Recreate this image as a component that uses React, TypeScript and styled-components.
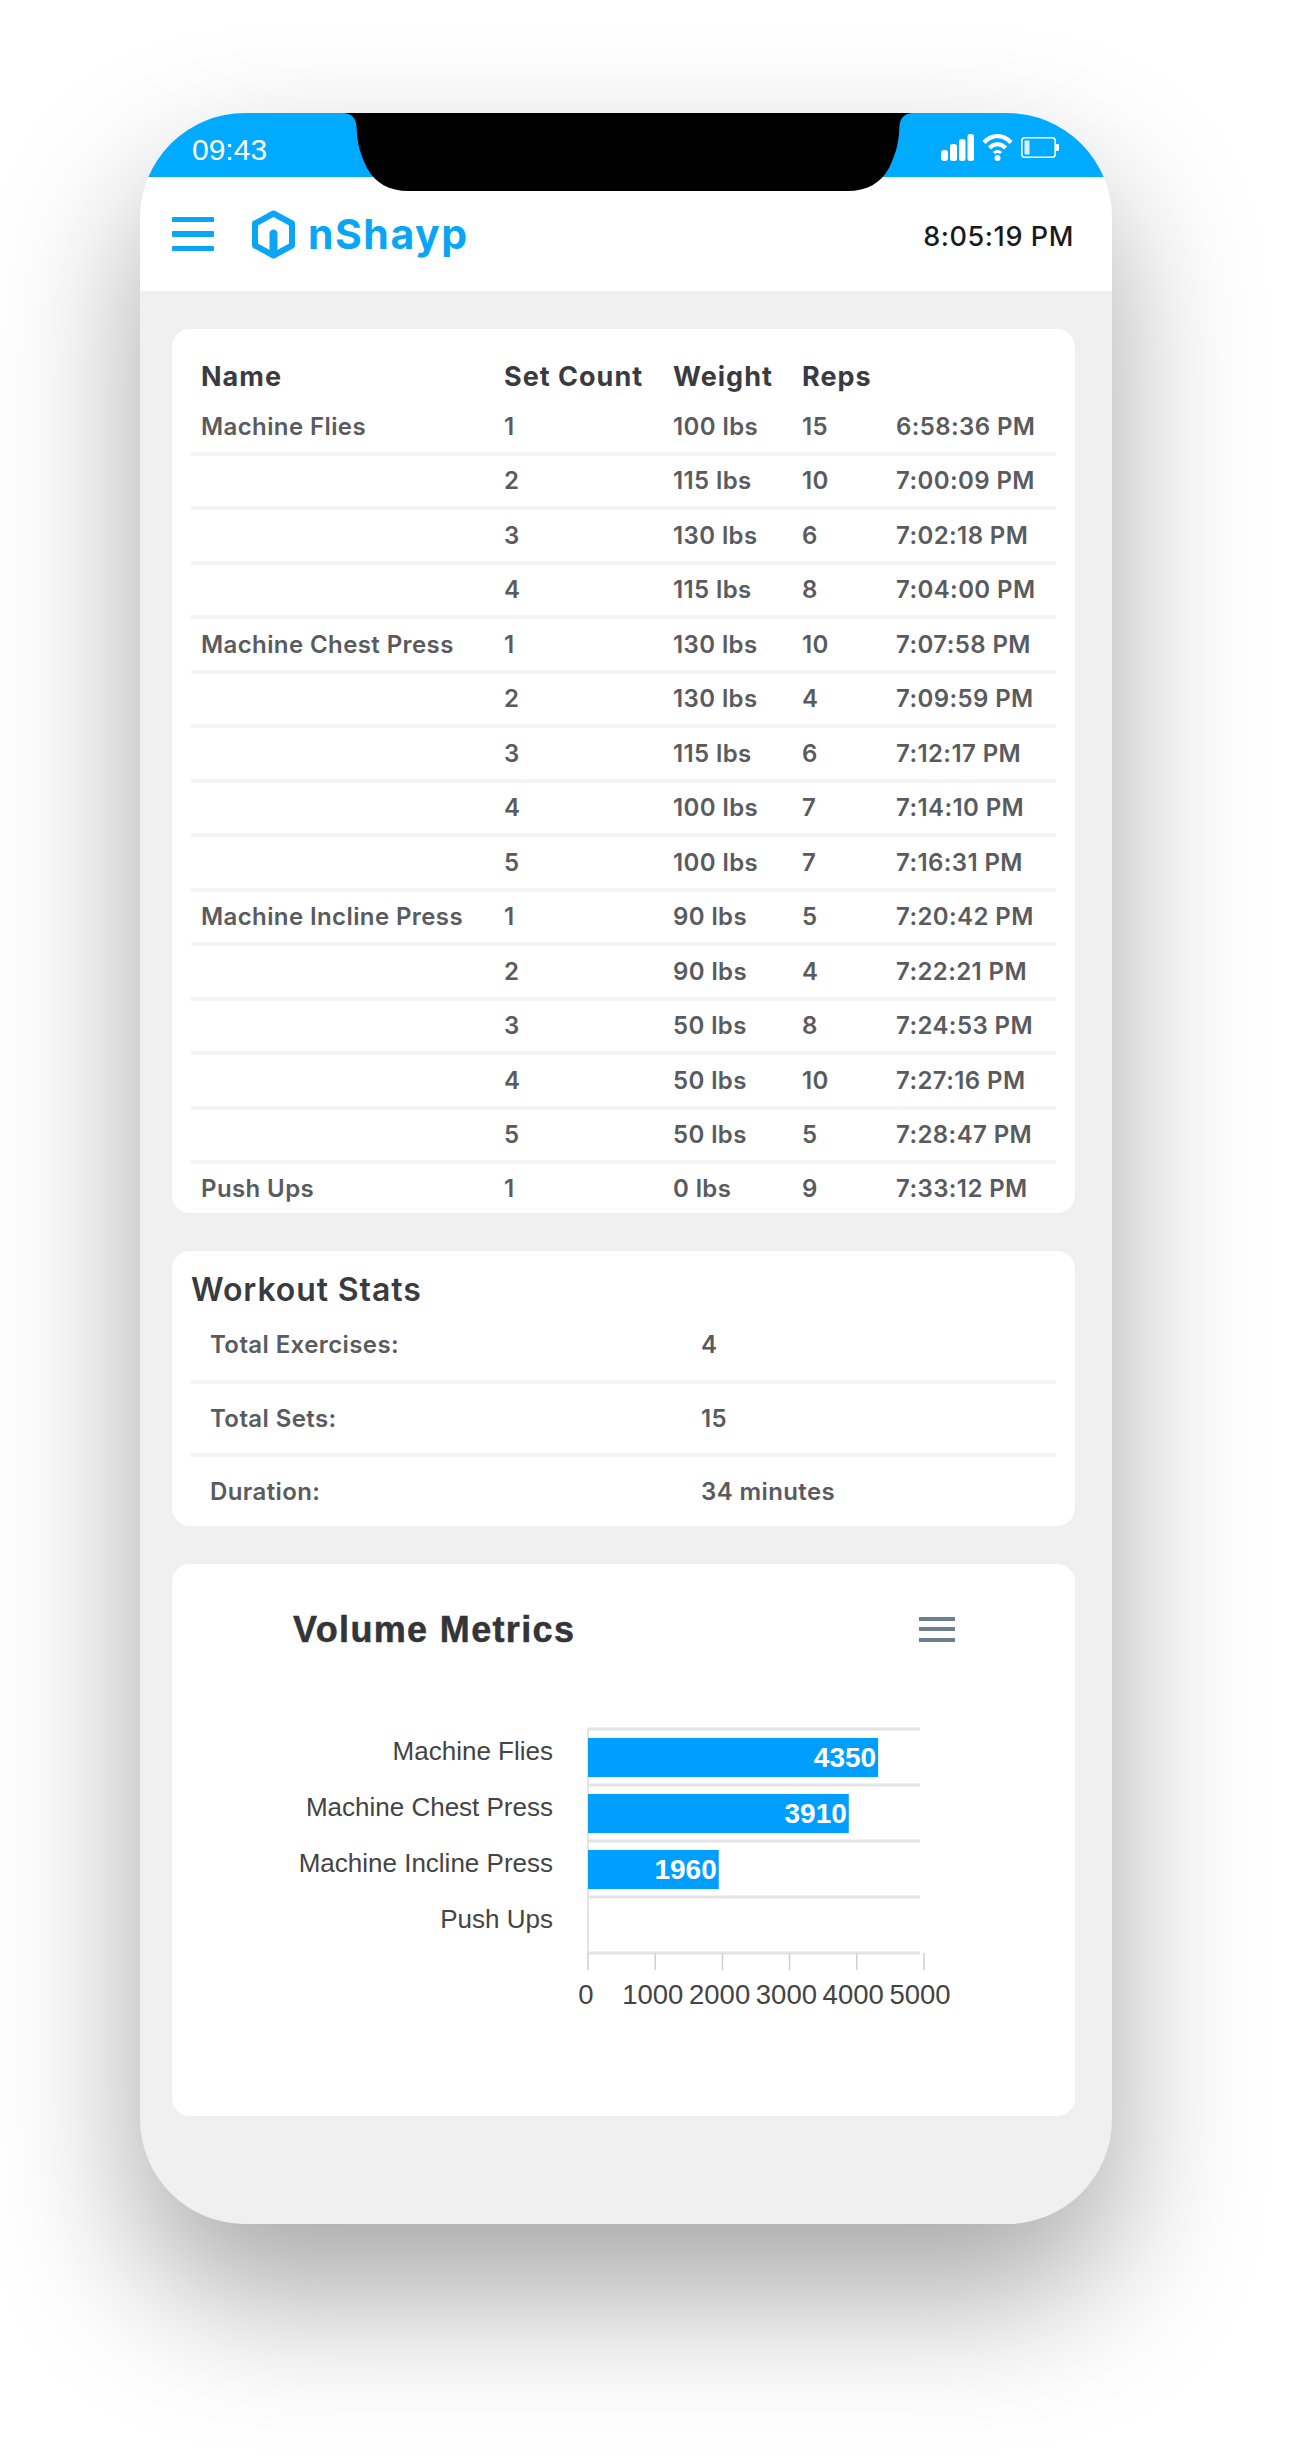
import React from 'react';
import styled, { createGlobalStyle } from 'styled-components';

const GlobalStyle = createGlobalStyle`
  html, body {
    margin: 0;
    padding: 0;
    background: #ffffff;
    font-family: 'Inter', 'Liberation Sans', sans-serif;
  }
`;

const Stage = styled.div`
  width: 1301px;
  height: 2463px;
  padding: 113px 0 0 140px;
  box-sizing: border-box;
  overflow: hidden;
`;

const Phone = styled.div`
  position: relative;
  width: 972px;
  height: 2111px;
  border-radius: 105px;
  background: #f0f0f0;
  box-shadow: 0 70px 145px rgba(0, 0, 0, 0.35);
  overflow: hidden;
`;

const StatusBar = styled.div`
  height: 64px;
  box-sizing: border-box;
  padding: 10px 53px 0 52px;
  background: #00aaff;
  display: flex;
  align-items: center;
  justify-content: space-between;
  color: #ffffff;
`;

const StatusTime = styled.span`
  font-family: 'Liberation Sans', sans-serif;
  font-size: 30px;
  line-height: 34px;
`;

const StatusIcons = styled.div`
  display: flex;
  align-items: center;
  gap: 8px;
  margin-bottom: 6px;
`;

const Notch = styled.svg`
  position: absolute;
  top: 0;
  left: 203px;
  display: block;
`;

const Header = styled.header`
  height: 114px;
  box-sizing: border-box;
  padding: 0 38px 0 32px;
  background: #ffffff;
  display: flex;
  align-items: center;
`;

const MenuButton = styled.div`
  width: 42px;
  display: flex;
  flex-direction: column;
  gap: 9px;
  margin-right: 38px;
`;

const MenuLine = styled.span`
  display: block;
  height: 5.5px;
  border-radius: 1px;
  background: #0aa5f5;
`;

const Logo = styled.div`
  display: flex;
  align-items: center;
  gap: 13px;
`;

const LogoText = styled.span`
  font-size: 41px;
  line-height: 49px;
  font-weight: 700;
  letter-spacing: 1.5px;
  color: #0aa5f5;
`;

const Clock = styled.span`
  margin-left: auto;
  margin-top: 5px;
  font-size: 27px;
  font-weight: 500;
  letter-spacing: 0.6px;
  color: #1a1a1a;
`;

const Content = styled.main`
  padding: 38px 37px 0 32px;
  display: flex;
  flex-direction: column;
  gap: 38px;
`;

const Card = styled.section`
  background: #ffffff;
  border-radius: 18px;
`;

const TableCard = styled(Card)`
  padding: 23px 19px 0;
`;

const tableColumns = '303px 169px 129px 94px 1fr';

const HeadRow = styled.div`
  display: grid;
  grid-template-columns: ${tableColumns};
  height: 49px;
  align-items: center;
  padding-left: 10px;
  font-size: 27px;
  font-weight: 700;
  letter-spacing: 1px;
  color: #3a3b3f;
`;

const Row = styled.div<{ $last: boolean }>`
  display: grid;
  grid-template-columns: ${tableColumns};
  height: ${({ $last }) => ($last ? '49px' : '54.5px')};
  box-sizing: border-box;
  align-items: center;
  padding-left: 10px;
  font-size: 24px;
  font-weight: 600;
  letter-spacing: 0.4px;
  color: #5a5b5f;
  border-bottom: ${({ $last }) => ($last ? 'none' : '4px solid #f4f4f4')};
`;

const StatsCard = styled(Card)`
  padding: 0 19px;
`;

const StatsTitle = styled.h2`
  margin: 0;
  height: 59px;
  display: flex;
  align-items: flex-end;
  box-sizing: border-box;
  font-size: 32px;
  line-height: 40px;
  font-weight: 600;
  letter-spacing: 0.9px;
  color: #3a3b3f;
`;

const StatRow = styled.div<{ $last: boolean }>`
  display: grid;
  grid-template-columns: 491px 1fr;
  align-items: center;
  height: ${({ $last }) => ($last ? '69px' : '73.5px')};
  box-sizing: border-box;
  padding-left: 19px;
  font-size: 24px;
  font-weight: 600;
  letter-spacing: 0.4px;
  color: #5a5b5f;
  border-bottom: ${({ $last }) => ($last ? 'none' : '4.5px solid #f4f4f4')};
`;

const ChartCard = styled(Card)`
  height: 552px;
  box-sizing: border-box;
  padding-top: 45px;
`;

const ChartHead = styled.div`
  display: flex;
  align-items: center;
  justify-content: space-between;
  height: 40px;
  padding: 0 120px 0 121px;
`;

const ChartTitle = styled.h2`
  margin: 2px 0 0;
  font-family: 'Liberation Sans', sans-serif;
  font-size: 36px;
  font-weight: 700;
  letter-spacing: 1.35px;
  -webkit-text-stroke: 0.5px #333539;
  color: #333539;
`;

const ChartMenu = styled.div`
  width: 36px;
  display: flex;
  flex-direction: column;
  gap: 6.5px;
`;

const ChartMenuLine = styled.span`
  display: block;
  height: 4px;
  background: #6e7f8f;
`;

const ChartPlot = styled.svg`
  display: block;
  margin-top: 51px;
  font-family: 'Liberation Sans', sans-serif;
`;

const sets = [
  ['Machine Flies', '1', '100 lbs', '15', '6:58:36 PM'],
  ['', '2', '115 lbs', '10', '7:00:09 PM'],
  ['', '3', '130 lbs', '6', '7:02:18 PM'],
  ['', '4', '115 lbs', '8', '7:04:00 PM'],
  ['Machine Chest Press', '1', '130 lbs', '10', '7:07:58 PM'],
  ['', '2', '130 lbs', '4', '7:09:59 PM'],
  ['', '3', '115 lbs', '6', '7:12:17 PM'],
  ['', '4', '100 lbs', '7', '7:14:10 PM'],
  ['', '5', '100 lbs', '7', '7:16:31 PM'],
  ['Machine Incline Press', '1', '90 lbs', '5', '7:20:42 PM'],
  ['', '2', '90 lbs', '4', '7:22:21 PM'],
  ['', '3', '50 lbs', '8', '7:24:53 PM'],
  ['', '4', '50 lbs', '10', '7:27:16 PM'],
  ['', '5', '50 lbs', '5', '7:28:47 PM'],
  ['Push Ups', '1', '0 lbs', '9', '7:33:12 PM'],
];

const stats = [
  ['Total Exercises:', '4'],
  ['Total Sets:', '15'],
  ['Duration:', '34 minutes'],
];

const volumes: [string, number][] = [
  ['Machine Flies', 4350],
  ['Machine Chest Press', 3910],
  ['Machine Incline Press', 1960],
  ['Push Ups', 0],
];

const PLOT_X = 416;
const PLOT_TOP = 29;
const ROW_H = 56;
const UNIT = 0.0667;

const VolumeChart = () => (
  <ChartPlot width="903" height="320" viewBox="0 0 903 320">
    {[0, 1, 2, 3, 4].map((i) => (
      <line key={i} x1={PLOT_X} x2="748" y1={PLOT_TOP + i * ROW_H} y2={PLOT_TOP + i * ROW_H} stroke="#e4e4e4" strokeWidth="3" />
    ))}
    <line x1={PLOT_X} x2={PLOT_X} y1={PLOT_TOP} y2={PLOT_TOP + 4 * ROW_H} stroke="#dcdcdc" strokeWidth="1.5" />
    {[0, 1, 2, 3, 4, 5].map((i) => (
      <line key={i} x1={PLOT_X + i * 67.2} x2={PLOT_X + i * 67.2} y1={PLOT_TOP + 4 * ROW_H} y2="270" stroke="#cfcfcf" strokeWidth="1.5" />
    ))}
    {volumes.map(([name, value], i) => (
      <g key={name}>
        <text x="381" y={60 + i * ROW_H} textAnchor="end" fontSize="26" fill="#444444">{name}</text>
        {value > 0 && (
          <>
            <rect x={PLOT_X} y={PLOT_TOP + 9 + i * ROW_H} width={value * UNIT} height="39" fill="#009fff" />
            <text x={PLOT_X + value * UNIT - 2} y={67 + i * ROW_H} textAnchor="end" fontSize="28" fontWeight="700" fill="#ffffff">{value}</text>
          </>
        )}
      </g>
    ))}
    {[0, 1000, 2000, 3000, 4000, 5000].map((tick, i) => (
      <text key={tick} x={414 + i * 66.8} y="304" textAnchor="middle" fontSize="27.5" fill="#444444">{tick}</text>
    ))}
  </ChartPlot>
);

const SignalIcon = () => (
  <svg width="33" height="27" viewBox="0 0 33 27" fill="#ffffff">
    <rect x="0" y="16" width="7" height="11" rx="3" />
    <rect x="9" y="10" width="7" height="17" rx="2.5" />
    <rect x="18" y="5" width="6.5" height="22" rx="2.5" />
    <rect x="26.5" y="0" width="6.5" height="27" rx="2.5" />
  </svg>
);

const WifiIcon = () => (
  <svg width="31" height="28" viewBox="0 0 31 28" fill="none" stroke="#ffffff" strokeWidth="4.2">
    <path d="M2 9.5 C9.5 1 21.5 1 29 9.5" />
    <path d="M7.5 15 C12 10 19 10 23.5 15" />
    <path d="M12 20 C14 18 17 18 19 20" strokeWidth="3" />
    <circle cx="15.5" cy="25" r="3" fill="#ffffff" stroke="none" />
  </svg>
);

const BatteryIcon = () => (
  <svg width="38" height="21" viewBox="0 0 38 21" fill="none">
    <rect x="0.8" y="0.8" width="33.4" height="19.4" rx="3" stroke="#ffffff" strokeWidth="1.6" />
    <rect x="3.5" y="3.5" width="5" height="14" fill="#d7eefb" />
    <rect x="35" y="7" width="3" height="7" rx="1" fill="#ffffff" />
  </svg>
);

const LogoMark = () => (
  <svg width="43" height="49" viewBox="0 0 43 49" fill="none">
    <path d="M21.5 3.5 L40 13.5 V35.5 L21.5 45.5 L3 35.5 V13.5 Z" stroke="#0aa5f5" strokeWidth="6" strokeLinejoin="round" />
    <path d="M17.5 44 V23.5 C17.5 21.3 19.3 19.5 21.5 19.5 C23.7 19.5 25.5 21.3 25.5 23.5 V44 Z" fill="#0aa5f5" />
  </svg>
);

export default function App() {
  return (
    <>
      <GlobalStyle />
      <Stage>
        <Phone>
          <StatusBar>
            <StatusTime>09:43</StatusTime>
            <StatusIcons>
              <SignalIcon />
              <WifiIcon />
              <BatteryIcon />
            </StatusIcons>
          </StatusBar>
          <Notch width="570" height="79" viewBox="0 0 570 79">
            <path
              d="M0 0 C8 0 13 5 13.5 13 C14 25 15 37 24 55 C32 70 46 78 66 78 L504 78 C524 78 538 70 546 55 C555 37 556 25 556.5 13 C557 5 562 0 570 0 Z"
              fill="#000000"
            />
          </Notch>
          <Header>
            <MenuButton>
              <MenuLine />
              <MenuLine />
              <MenuLine />
            </MenuButton>
            <Logo>
              <LogoMark />
              <LogoText>nShayp</LogoText>
            </Logo>
            <Clock>8:05:19 PM</Clock>
          </Header>
          <Content>
            <TableCard>
              <HeadRow>
                <span>Name</span>
                <span>Set Count</span>
                <span>Weight</span>
                <span>Reps</span>
                <span />
              </HeadRow>
              {sets.map((row, i) => (
                <Row key={i} $last={i === sets.length - 1}>
                  {row.map((cell, j) => (
                    <span key={j}>{cell}</span>
                  ))}
                </Row>
              ))}
            </TableCard>
            <StatsCard>
              <StatsTitle>Workout Stats</StatsTitle>
              {stats.map(([label, value], i) => (
                <StatRow key={label} $last={i === stats.length - 1}>
                  <span>{label}</span>
                  <span>{value}</span>
                </StatRow>
              ))}
            </StatsCard>
            <ChartCard>
              <ChartHead>
                <ChartTitle>Volume Metrics</ChartTitle>
                <ChartMenu>
                  <ChartMenuLine />
                  <ChartMenuLine />
                  <ChartMenuLine />
                </ChartMenu>
              </ChartHead>
              <VolumeChart />
            </ChartCard>
          </Content>
        </Phone>
      </Stage>
    </>
  );
}
